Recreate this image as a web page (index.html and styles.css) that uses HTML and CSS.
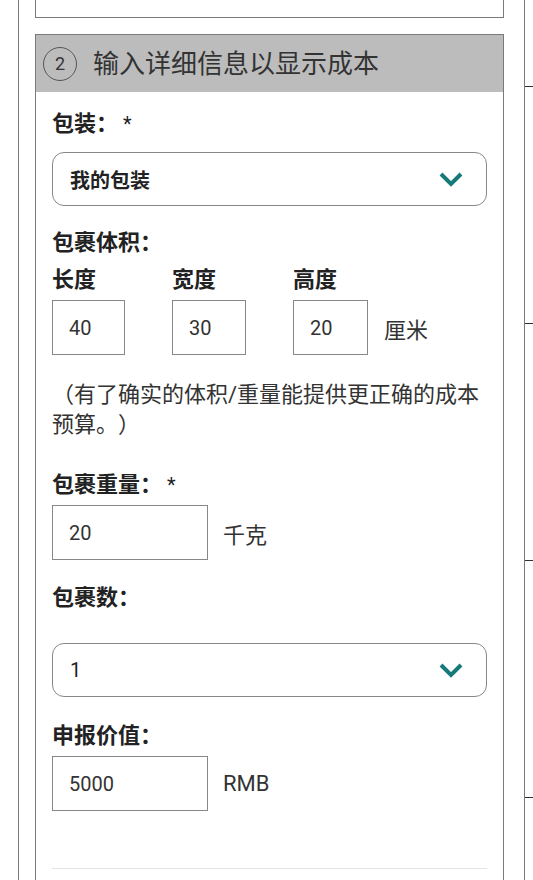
FILE: index.html
```html
<!DOCTYPE html>
<html lang="zh-CN">
<head>
<meta charset="utf-8">
<title>输入详细信息以显示成本</title>
<link rel="stylesheet" href="styles.css">
</head>
<body>
<div class="page">
  <div class="frame">
    <div class="card card-prev"></div>
    <section class="card">
      <header class="card-head">
        <span class="step">2</span>
        <h2 class="card-title">输入详细信息以显示成本</h2>
      </header>
      <div class="card-body">
        <div class="label label-first">包装：<span class="req">&nbsp;*</span></div>
        <div class="select select-bold">
          <span>我的包装</span>
          <svg class="chev" width="24" height="15" viewBox="0 0 24 15"><polyline points="2,2 12,12 22,2" fill="none" stroke="#16797a" stroke-width="4"/></svg>
        </div>

        <div class="label label-volume">包裹体积：</div>
        <div class="dims">
          <div class="dim-label">长度</div>
          <div class="dim-label">宽度</div>
          <div class="dim-label">高度</div>
          <div></div>
          <div class="box">40</div>
          <div class="box">30</div>
          <div class="box">20</div>
          <div class="unit">厘米</div>
        </div>
        <p class="note">（有了确实的体积/重量能提供更正确的成本预算。）</p>

        <div class="label label-weight">包裹重量：<span class="req">&nbsp;*</span></div>
        <div class="field-row">
          <div class="box box-wide">20</div>
          <span class="unit">千克</span>
        </div>

        <div class="label label-count">包裹数：</div>
        <div class="select select-count">
          <span>1</span>
          <svg class="chev" width="24" height="15" viewBox="0 0 24 15"><polyline points="2,2 12,12 22,2" fill="none" stroke="#16797a" stroke-width="4"/></svg>
        </div>

        <div class="label label-value">申报价值：</div>
        <div class="field-row">
          <div class="box box-wide">5000</div>
          <span class="unit">RMB</span>
        </div>
        <div class="divider"></div>
      </div>
    </section>
  </div>
  <div class="ticks"></div>
</div>
</body>
</html>
```

FILE: styles.css
```css
html, body {
  margin: 0;
  padding: 0;
  background: #fff;
}
body {
  font-family: Roboto, "Noto Sans CJK SC", sans-serif;
  color: #333;
  overflow: hidden;
  text-spacing-trim: space-all;
}
.page {
  display: flex;
  height: 880px;
}
.frame {
  margin-left: 18px;
  width: 507px;
  border-left: 1px solid #7a7a7a;
  border-right: 1px solid #7a7a7a;
  padding: 0 20px 0 16px;
  box-sizing: border-box;
}
.ticks {
  flex: 1;
  background-image: repeating-linear-gradient(to bottom, #333 0 1px, transparent 1px 237px);
  background-position: 0 86px;
}
.card {
  border: 1px solid #7a7a7a;
  background: #fff;
}
.card-prev {
  border-top: none;
  height: 17px;
  margin-bottom: 16px;
}
.card-head {
  display: flex;
  align-items: center;
  gap: 16px;
  height: 57px;
  padding-left: 7px;
  background: #bcbcbc;
}
.step {
  width: 32px;
  height: 32px;
  border: 1px solid #555;
  border-radius: 50%;
  display: flex;
  align-items: center;
  justify-content: center;
  font-size: 18px;
  color: #333;
}
.card-title {
  margin: 0;
  font-size: 26px;
  font-weight: 400;
  color: #333;
  line-height: 30px;
}
.card-body {
  padding: 17px 16px 12px;
}
.label {
  font-size: 22px;
  line-height: 30px;
  font-weight: 700;
  color: #222;
}
.req {
  font-weight: 400;
  font-size: 20px;
}
.label-volume { margin-top: 22px; }
.label-weight { margin-top: 30px; }
.label-count { margin-top: 23px; }
.label-value { margin-top: 24px; }
.select {
  display: flex;
  align-items: center;
  justify-content: space-between;
  height: 52px;
  border: 1px solid #888;
  border-radius: 12px;
  padding: 0 23px 0 17px;
  font-size: 20px;
  color: #222;
}
.select-bold {
  margin-top: 13px;
  font-weight: 700;
}
.select-count {
  margin-top: 30px;
}
.chev { display: block; }
.dims {
  display: grid;
  grid-template-columns: 73px 74px 75px auto;
  column-gap: 47px;
  row-gap: 5px;
  margin-top: 7px;
}
.dim-label {
  font-size: 22px;
  line-height: 30px;
  font-weight: 700;
  color: #222;
}
.box {
  height: 53px;
  border: 1px solid #888;
  display: flex;
  align-items: center;
  padding-left: 16px;
  font-size: 20px;
  color: #333;
}
.unit {
  align-self: center;
  font-size: 22px;
  color: #333;
  margin-left: -31px;
}
.note {
  margin: 25px 0 0;
  font-size: 22px;
  line-height: 30px;
  color: #333;
}
.field-row {
  display: flex;
  align-items: center;
  gap: 15px;
  margin-top: 5px;
}
.field-row .unit { margin-left: 0; }
.box-wide { width: 138px; }
.divider {
  margin-top: 57px;
  border-top: 1px solid #e4e4e4;
}
```
